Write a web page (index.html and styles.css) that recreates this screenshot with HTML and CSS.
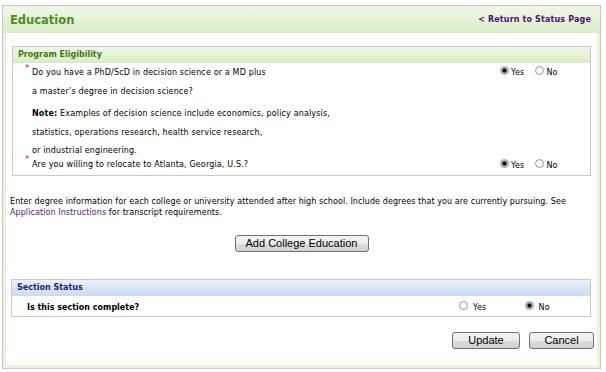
FILE: index.html
```html
<!DOCTYPE html>
<html>
<head>
  <title>Education</title>
  <link rel="stylesheet" href="styles.css">
</head>
<body>
  <div class="frame">
    <div class="inner">
      <div class="page-header">
        <h1>Education</h1>
        <a class="return-link" href="#">&lt; Return to Status Page</a>
      </div>

      <div class="box">
        <div class="box-title green">Program Eligibility</div>
        <div class="box-body">
          <div class="q-row first">
            <div class="q-text">
              <div class="line"><span class="req">*</span>Do you have a PhD/ScD in decision science or a MD plus</div>
              <div class="line">a master’s degree in decision science?</div>
              <div class="line note-first"><b>Note:</b> Examples of decision science include economics, policy analysis,</div>
              <div class="line">statistics, operations research, health service research,</div>
              <div class="line short">or industrial engineering.</div>
            </div>
            <div class="choices">
              <span class="radio checked"></span><span class="opt">Yes</span>
              <span class="radio"></span><span class="opt">No</span>
            </div>
          </div>
          <div class="q-row last">
            <div class="q-text">
              <div class="line"><span class="req">*</span>Are you willing to relocate to Atlanta, Georgia, U.S.?</div>
            </div>
            <div class="choices">
              <span class="radio checked"></span><span class="opt">Yes</span>
              <span class="radio"></span><span class="opt">No</span>
            </div>
          </div>
        </div>
      </div>

      <p class="intro">Enter degree information for each college or university attended after high school. Include degrees that you are currently pursuing. See <a href="#">Application Instructions</a> for transcript requirements.</p>

      <div class="center">
        <button class="btn add-btn">Add College Education</button>
      </div>

      <div class="box status-box">
        <div class="box-title blue">Section Status</div>
        <div class="status-row">
          <span class="status-q">Is this section complete?</span>
          <div class="status-choices">
            <span class="choice"><span class="radio"></span><span class="opt">Yes</span></span>
            <span class="choice"><span class="radio checked"></span><span class="opt">No</span></span>
          </div>
        </div>
      </div>

      <div class="actions">
        <button class="btn update-btn">Update</button>
        <button class="btn cancel-btn">Cancel</button>
      </div>
    </div>
  </div>
</body>
</html>
```

FILE: styles.css
```css
body {
  margin: 0;
  font-family: 'DejaVu Sans', Verdana, sans-serif;
  font-size: 8px;
  letter-spacing: 0.15px;
  color: #000;
  background: #fff;
}

.frame {
  margin: 5px 5px 3px 2px;
  border: 1px solid #c6c6c6;
  width: 597px;
}

.inner {
  border: 3px solid #e9f3de;
  border-top: none;
  height: 362px;
  box-sizing: border-box;
  display: flex;
  flex-direction: column;
}

.page-header {
  height: 27px;
  margin: 0 -3px;
  padding: 0 9px 0 7px;
  display: flex;
  align-items: center;
  justify-content: space-between;
  background: linear-gradient(#f0f8e8, #d9ecc6);
}

.page-header h1 {
  margin: 0;
  font-size: 11.5px;
  letter-spacing: 0;
  font-weight: bold;
  color: #4f8a26;
}

.return-link {
  font-weight: bold;
  letter-spacing: 0.15px;
  color: #4d1570;
  text-decoration: none;
}

.box {
  margin: 13px 6px 0 6px;
  border: 1px solid #c9c9c9;
}

.box-title {
  height: 16px;
  line-height: 16px;
  padding-left: 5px;
  font-weight: bold;
  letter-spacing: 0;
}

.box-title.green {
  color: #41781b;
  background: linear-gradient(#f0f8e8, #d8ebc4);
}

.box-title.blue {
  color: #1c2576;
  background: linear-gradient(#ecf1fa, #ccdaf0);
}

.box-body {
  padding: 0 0 4px 0;
}

.q-row {
  display: flex;
  justify-content: space-between;
}

.q-text {
  padding-left: 19px;
}

.line {
  line-height: 19px;
  position: relative;
}

.line.note-first {
  margin-top: 3px;
}

.line.short {
  line-height: 17px;
}

.q-row.last .line {
  line-height: 12px;
}

.req {
  color: #d41a1a;
  font-size: 9px;
  position: absolute;
  left: -7px;
  top: -4px;
}

.q-row.last .req {
  top: -6px;
}

.choices {
  width: 90px;
  display: flex;
  align-items: center;
  height: 19px;
}

.q-row.last .choices {
  height: 12px;
}

.radio {
  display: inline-block;
  width: 7px;
  height: 7px;
  border-radius: 50%;
  border: 1px solid #9a9a9a;
  background: radial-gradient(#ffffff 40%, #e2e2e2);
  box-sizing: content-box;
  position: relative;
  top: -2px;
}

.radio.checked {
  background: radial-gradient(#111 35%, #7a7a7a 45%, #e2e2e2 70%);
}

.opt {
  margin-left: 2px;
  margin-right: 11px;
}

.intro {
  margin: 20px 6px 0 4px;
  line-height: 11px;
  letter-spacing: 0.08px;
}

.intro a {
  color: #4d1a82;
  text-decoration: none;
}

.center {
  display: flex;
  justify-content: center;
  margin-top: 17px;
}

.btn {
  font-family: 'Liberation Sans', Arial, sans-serif;
  font-size: 11px;
  letter-spacing: 0;
  height: 17px;
  padding: 0;
  border: 1px solid #707070;
  border-radius: 3px;
  background: linear-gradient(#f4f4f4 0%, #ececec 50%, #dcdcdc 51%, #d2d2d2 100%);
  color: #000;
  line-height: 15px;
}

.add-btn {
  width: 134px;
}

.status-box {
  margin-top: 27px;
  margin-left: 5px;
}

.status-row {
  height: 20px;
  padding-top: 2px;
  box-sizing: border-box;
  display: flex;
  align-items: center;
}

.status-q {
  font-weight: bold;
  letter-spacing: 0;
  padding-left: 15px;
  flex: 1;
}

.status-choices {
  display: flex;
  width: 131px;
}

.choice {
  width: 67px;
  display: flex;
  align-items: center;
}

.choice .opt {
  margin-left: 5px;
}

.actions {
  display: flex;
  justify-content: flex-end;
  gap: 9px;
  margin: 15px 3px 0 0;
}

.update-btn {
  width: 68px;
}

.cancel-btn {
  width: 65px;
}
```
